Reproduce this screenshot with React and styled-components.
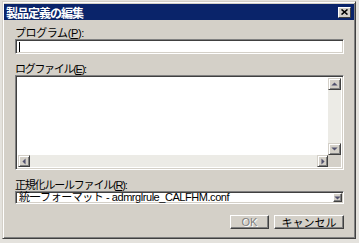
import React from 'react';
import styled, { createGlobalStyle } from 'styled-components';

const GlobalStyle = createGlobalStyle`
    body {
        margin: 0;
        background: #e4e2dd;
        font-family: "Liberation Sans", "Noto Sans CJK JP", sans-serif;
    }
`;

const Page = styled.div`
    box-sizing: border-box;
    width: 359px;
    height: 243px;
    padding: 1px 3px 4px 2px;
`;

const Window = styled.div`
    box-sizing: border-box;
    height: 100%;
    display: flex;
    flex-direction: column;
    padding: 2px 1px 1px 1px;
    background: #d4d0c8;
    border: 1px solid;
    border-color: #d4d0c8 #404040 #404040 #d4d0c8;
    box-shadow: inset 1px 1px #ffffff, inset -1px -1px #808080;
`;

const TitleBar = styled.div`
    height: 16px;
    display: flex;
    align-items: center;
    justify-content: space-between;
    padding: 0 3px 0 2px;
    background: #0a246a;
    color: #ffffff;
    font-size: 12px;
    font-weight: bold;
    letter-spacing: -1px;
`;

const CloseButton = styled.div`
    box-sizing: border-box;
    width: 13px;
    height: 11px;
    display: flex;
    align-items: center;
    justify-content: center;
    background: #d4d0c8;
    border: 1px solid;
    border-color: #ffffff #404040 #404040 #ffffff;
`;

const Body = styled.div`
    flex: 1;
    display: flex;
    flex-direction: column;
    padding: 0 10px 0 11px;
    font-size: 11px;
    color: #000000;
`;

const Label = styled.div`
    height: 12px;
    line-height: 12px;
    margin-top: ${(p) => p.$gap}px;
    letter-spacing: ${(p) => p.$spacing}px;
    white-space: nowrap;

    u {
        text-decoration: underline;
    }
`;

const Sunken = styled.div`
    box-sizing: border-box;
    border: 1px solid;
    border-color: #808080 #ffffff #ffffff #808080;
    box-shadow: inset 1px 1px #404040, inset -1px -1px #d4d0c8;
    background: #ffffff;
`;

const TextInput = styled(Sunken)`
    height: 15px;
    padding: 2px 0 0 3px;
`;

const Caret = styled.span`
    display: block;
    width: 1px;
    height: 10px;
    background: #000000;
`;

const ListBox = styled(Sunken)`
    height: 95px;
    padding: 2px;
    display: grid;
    grid-template-columns: 1fr 13px;
    grid-template-rows: 1fr 12px;
`;

const ScrollTrack = styled.div`
    display: flex;
    flex-direction: ${(p) => (p.$vertical ? 'column' : 'row')};
    justify-content: space-between;
    background: #ecebe6;
`;

const Corner = styled.div`
    background: #d4d0c8;
`;

const ArrowButton = styled.div`
    box-sizing: border-box;
    width: ${(p) => p.$w}px;
    height: ${(p) => p.$h}px;
    display: flex;
    align-items: center;
    justify-content: center;
    background: #d4d0c8;
    border: 1px solid;
    border-color: #d4d0c8 #404040 #404040 #d4d0c8;
    box-shadow: inset 1px 1px #ffffff, inset -1px -1px #808080;
`;

const Select = styled(Sunken)`
    height: 13px;
    display: flex;
    align-items: center;
    justify-content: space-between;
    padding: 0 1px 0 3px;
    line-height: 9px;
    letter-spacing: -0.45px;
    white-space: nowrap;
`;

const DropButton = styled(ArrowButton)`
    width: 9px;
    height: 9px;
    box-shadow: inset -1px -1px #808080;
    border-color: #ffffff #404040 #404040 #ffffff;
`;

const ButtonRow = styled.div`
    display: flex;
    justify-content: flex-end;
    gap: 5px;
    margin-top: 11px;
`;

const Button = styled.div`
    box-sizing: border-box;
    width: ${(p) => p.$w}px;
    height: 14px;
    display: flex;
    align-items: center;
    justify-content: center;
    background: #d4d0c8;
    border: 1px solid;
    border-color: #ffffff #404040 #404040 #ffffff;
    box-shadow: inset -1px -1px #808080;
    color: ${(p) => (p.$disabled ? '#808080' : '#000000')};
    text-shadow: ${(p) => (p.$disabled ? '1px 1px #ffffff' : 'none')};
    font-size: 11px;
`;

const Arrow = ({ dir, size = 5 }) => {
    const pts = {
        up: '0,4 3.5,0.5 7,4',
        down: '0,0.5 3.5,4 7,0.5',
        left: '4,0 0.5,3.5 4,7',
        right: '0.5,0 4,3.5 0.5,7',
    }[dir];
    const vert = dir === 'up' || dir === 'down';
    return (
        <svg width={vert ? 7 : size - 1} height={vert ? size - 1 : 7} viewBox={vert ? '0 0 7 4.5' : '0 0 4.5 7'}>
            <polygon points={pts} fill="#52526e" />
        </svg>
    );
};

const App = () => {
    return (
        <Page>
            <GlobalStyle />
            <Window>
                <TitleBar>
                    <span>製品定義の編集</span>
                    <CloseButton>
                        <svg width="7" height="6" viewBox="0 0 7 6">
                            <path d="M0.5 0.5 L6.5 5.5 M6.5 0.5 L0.5 5.5" stroke="#000" strokeWidth="1.6" />
                        </svg>
                    </CloseButton>
                </TitleBar>
                <Body>
                    <Label $gap={7} $spacing={-0.4}>プログラム(<u>P</u>):</Label>
                    <TextInput>
                        <Caret />
                    </TextInput>
                    <Label $gap={9} $spacing={-1.3}>ログファイル(<u>E</u>):</Label>
                    <ListBox>
                        <div />
                        <ScrollTrack $vertical>
                            <ArrowButton $w={13} $h={12}>
                                <Arrow dir="up" />
                            </ArrowButton>
                            <ArrowButton $w={13} $h={12}>
                                <Arrow dir="down" />
                            </ArrowButton>
                        </ScrollTrack>
                        <ScrollTrack>
                            <ArrowButton $w={12} $h={12}>
                                <Arrow dir="left" />
                            </ArrowButton>
                            <ArrowButton $w={11} $h={12}>
                                <Arrow dir="right" />
                            </ArrowButton>
                        </ScrollTrack>
                        <Corner />
                    </ListBox>
                    <Label $gap={9} $spacing={-1.2}>正規化ルールファイル(<u>R</u>):</Label>
                    <Select>
                        <span>統一フォーマット - admrglrule_CALFHM.conf</span>
                        <DropButton>
                            <Arrow dir="down" />
                        </DropButton>
                    </Select>
                    <ButtonRow>
                        <Button $w={39} $disabled>OK</Button>
                        <Button $w={70}>キャンセル</Button>
                    </ButtonRow>
                </Body>
            </Window>
        </Page>
    );
};

export default App;
